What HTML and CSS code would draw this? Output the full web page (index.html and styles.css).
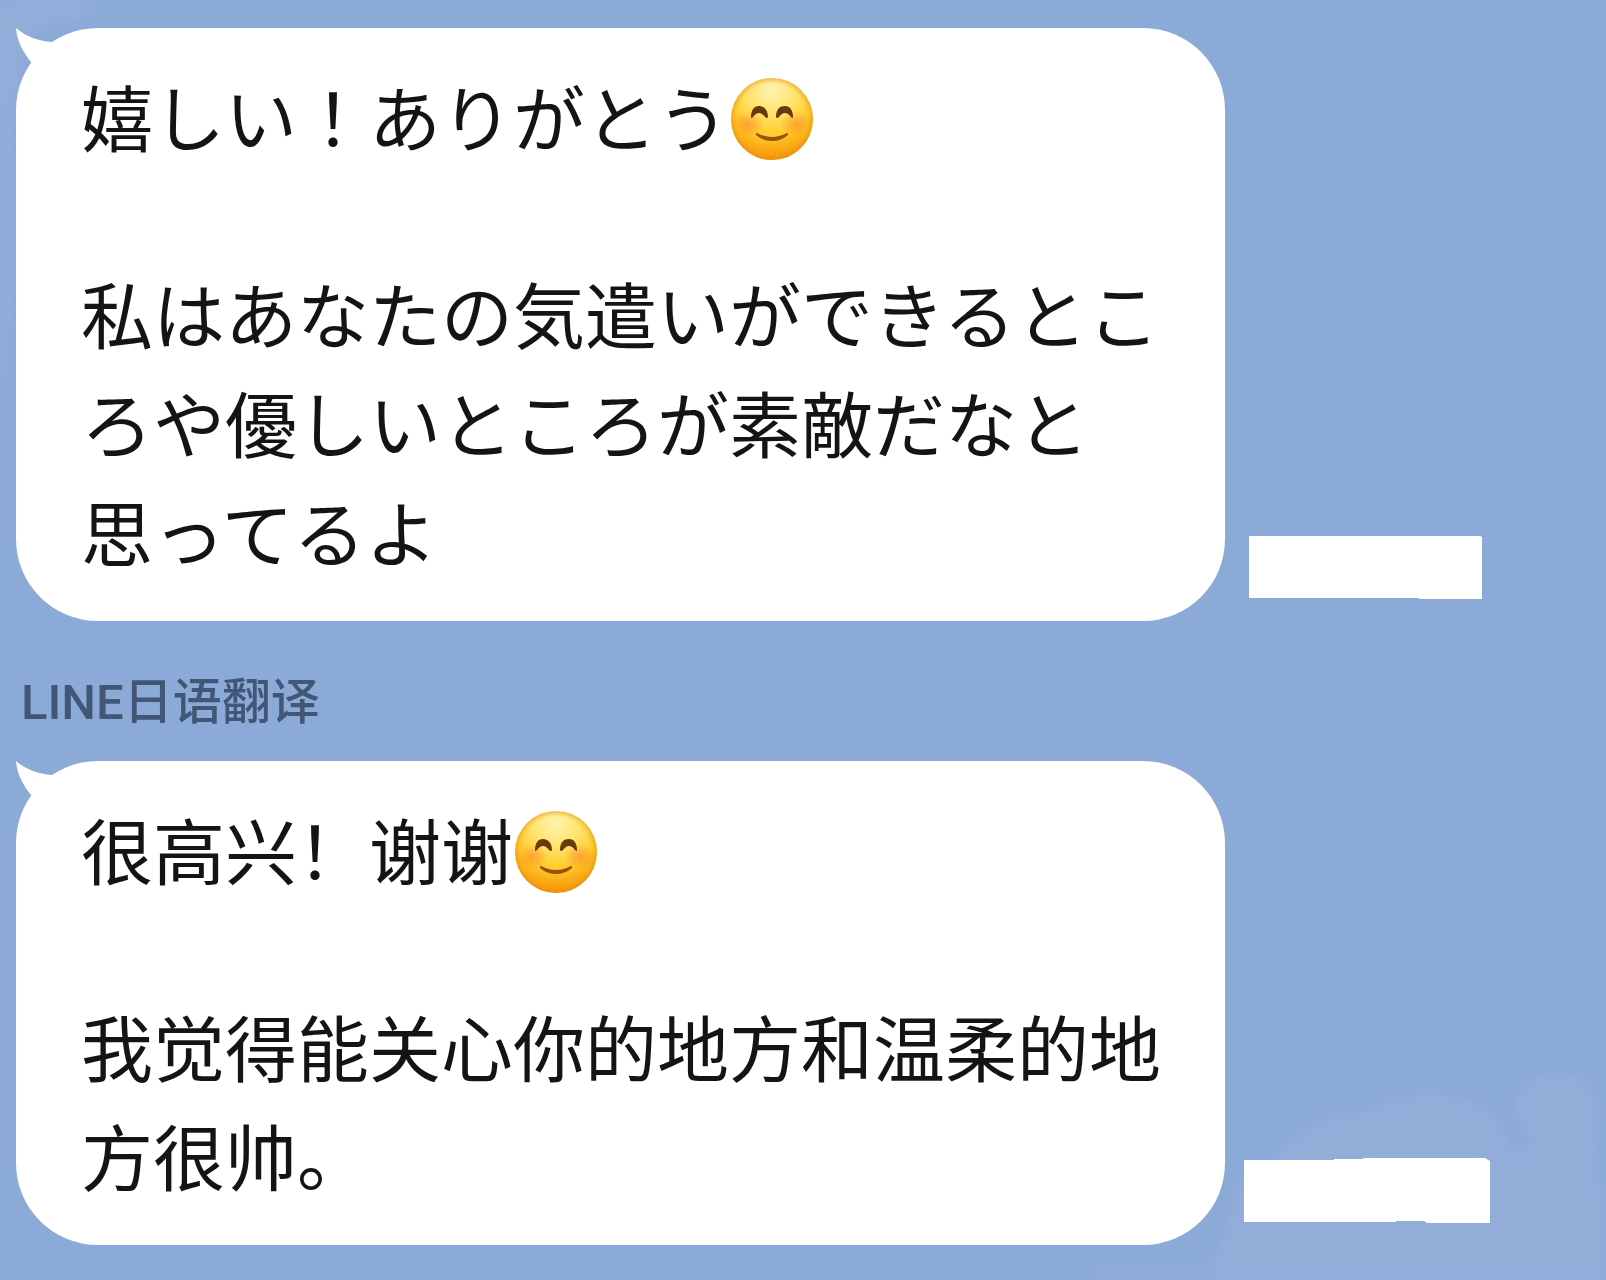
FILE: index.html
```html
<!DOCTYPE html>
<html lang="ja">
<head>
    <meta charset="UTF-8">
    <meta name="viewport" content="width=device-width, initial-scale=1.0">
    <title>Chat</title>
    <link rel="stylesheet" href="styles.css">
</head>
<body>
    <!-- faint clouds of the chat wallpaper -->
    <svg class="cloud cloud-top" viewBox="0 0 110 420" aria-hidden="true">
        <path d="M0 0H94V14Q60 24 40 26Q14 60 12 150V300L0 420Z"/>
    </svg>
    <svg class="cloud cloud-bottom" viewBox="0 0 540 216" aria-hidden="true">
        <path d="M20 240L30 204H145L166 150Q170 112 190 106L204 100Q220 74 262 52L300 46Q330 34 350 30Q400 26 426 50Q440 66 450 90L466 80Q442 40 456 22Q480 0 512 12Q536 26 534 60Q524 110 540 130V240Z"/>
    </svg>

    <main class="chat">
        <div class="message">
            <div class="bubble">
                <svg class="tail" viewBox="0 0 42 40" aria-hidden="true"><path d="M0 0C9 8 22 13 36 14L42 22L22 40L15 34C7 24 1 13 0 0Z"/></svg>
                <p>嬉しい！ありがとう<svg class="emoji" viewBox="0 0 82 82" role="img" aria-label="smile">
                    <defs>
                        <radialGradient id="face" cx="50%" cy="15%" r="85%">
                            <stop offset="0" stop-color="#fff3b0"/>
                            <stop offset="0.35" stop-color="#ffe36a"/>
                            <stop offset="0.65" stop-color="#ffc928"/>
                            <stop offset="1" stop-color="#f59206"/>
                        </radialGradient>
                        <radialGradient id="rim">
                            <stop offset="0.86" stop-color="#e99a10" stop-opacity="0"/>
                            <stop offset="1" stop-color="#e08c10" stop-opacity="0.5"/>
                        </radialGradient>
                        <radialGradient id="blush">
                            <stop offset="0" stop-color="#f9762f" stop-opacity="0.5"/>
                            <stop offset="1" stop-color="#f9762f" stop-opacity="0"/>
                        </radialGradient>
                    </defs>
                    <circle cx="41" cy="41" r="41" fill="url(#face)"/>
                    <circle cx="41" cy="41" r="41" fill="url(#rim)"/>
                    <ellipse cx="17" cy="46" rx="16" ry="13" fill="url(#blush)"/>
                    <ellipse cx="65" cy="46" rx="16" ry="13" fill="url(#blush)"/>
                    <path d="M20 39C20 31 24 28 28 28C33 28 37 32 37 39Q36 41 34 39Q28 31 22 39Q20 41 20 39ZM45 39C45 31 49 28 54 28C58 28 62 31 62 39Q62 41 60 39Q54 31 48 39Q46 41 45 39Z" fill="#693a0b"/>
                    <path d="M26 55Q41 63 56 55Q58 56 57 57Q50 63 41 63Q32 63 25 57Q24 56 26 55Z" fill="#9a4f0c"/>
                </svg></p>
                <p class="next">私はあなたの気遣いができるところや優しいところが素敵だなと<br>思ってるよ</p>
            </div>
            <svg class="stamp" width="233" height="63" viewBox="0 0 233 63" aria-hidden="true"><path d="M0 0H232V1H233V63H170V62H0Z"/></svg>
        </div>

        <h2 class="sender" lang="zh-CN">LINE日语翻译</h2>

        <div class="message near" lang="zh-CN">
            <div class="bubble">
                <svg class="tail" viewBox="0 0 42 40" aria-hidden="true"><path d="M0 0C9 8 22 13 36 14L42 22L22 40L15 34C7 24 1 13 0 0Z"/></svg>
                <p>很高兴！谢谢<svg class="emoji" viewBox="0 0 82 82" role="img" aria-label="smile">
                    <circle cx="41" cy="41" r="41" fill="url(#face)"/>
                    <circle cx="41" cy="41" r="41" fill="url(#rim)"/>
                    <ellipse cx="17" cy="46" rx="16" ry="13" fill="url(#blush)"/>
                    <ellipse cx="65" cy="46" rx="16" ry="13" fill="url(#blush)"/>
                    <path d="M20 39C20 31 24 28 28 28C33 28 37 32 37 39Q36 41 34 39Q28 31 22 39Q20 41 20 39ZM45 39C45 31 49 28 54 28C58 28 62 31 62 39Q62 41 60 39Q54 31 48 39Q46 41 45 39Z" fill="#693a0b"/>
                    <path d="M26 55Q41 63 56 55Q58 56 57 57Q50 63 41 63Q32 63 25 57Q24 56 26 55Z" fill="#9a4f0c"/>
                </svg></p>
                <p class="next">我觉得能关心你的地方和温柔的地方很帅。</p>
            </div>
            <svg class="stamp" width="246" height="65" viewBox="0 0 246 65" aria-hidden="true"><path d="M0 2H90V1H119V0H241L246 3V65H183L180 63H152V64H0Z"/></svg>
        </div>
    </main>
</body>
</html>
```

FILE: styles.css
```css
* {
    box-sizing: border-box;
}
body {
    position: relative;
    margin: 0;
    min-height: 100vh;
    overflow-x: hidden;
    background: #8caad8;
    color: #141414;
    font-family: "Noto Sans CJK JP", sans-serif;
}
.chat {
    position: relative;
    padding: 28px 16px 36px;
}
.message {
    display: flex;
    align-items: flex-end;
    gap: 24px;
}
.message.near {
    gap: 19px;
}
.message:lang(zh) {
    font-family: "Noto Sans CJK SC", sans-serif;
}
.bubble {
    position: relative;
    padding: 32px 64px 37px 65px;
    border-radius: 82px;
    background: white;
    font-size: 72px;
    line-height: 109px;
}
.bubble p {
    margin: 0;
    max-width: 15em;
}
.bubble .next {
    margin-top: 88px;
}
.tail {
    position: absolute;
    top: 0;
    left: 0;
    width: 42px;
    height: 40px;
    fill: white;
}
.emoji {
    width: 82px;
    height: 82px;
    margin-left: 2px;
    vertical-align: -14px;
}
.stamp {
    flex-shrink: 0;
    margin-bottom: 22px;
    fill: white;
}
.sender {
    margin: 54px 5px 30px;
    color: #425775;
    font-family: Roboto, "Noto Sans CJK SC", sans-serif;
    font-size: 49px;
    font-weight: 500;
    line-height: 56px;
}
.cloud {
    position: absolute;
    fill: #93add9;
    filter: blur(5px);
}
.cloud-top {
    top: 0;
    left: 0;
    width: 110px;
}
.cloud-bottom {
    right: 0;
    bottom: 0;
    width: 540px;
}
```
